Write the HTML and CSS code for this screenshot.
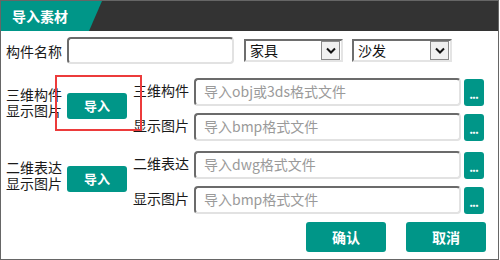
FILE: index.html
```html
<!DOCTYPE html>
<html lang="zh">
<head>
  <meta charset="UTF-8">
  <title>导入素材</title>
  <link rel="stylesheet" href="styles.css">
</head>
<body>
  <div class="dialog">
    <!-- 标题栏 -->
    <div class="title-bar">
      <div class="title-tab">导入素材</div>
    </div>

    <!-- 构件名称 -->
    <div class="name-row">
      <span class="label name-label">构件名称</span>
      <div class="text-box name-box"></div>
      <div class="select select-a">
        <span class="select-text">家具</span>
        <span class="select-arrow">
          <svg width="10" height="7" viewBox="0 0 10 7"><polyline points="1,1.5 5,5.5 9,1.5" fill="none" stroke="#111" stroke-width="2"/></svg>
        </span>
      </div>
      <div class="select select-b">
        <span class="select-text">沙发</span>
        <span class="select-arrow">
          <svg width="10" height="7" viewBox="0 0 10 7"><polyline points="1,1.5 5,5.5 9,1.5" fill="none" stroke="#111" stroke-width="2"/></svg>
        </span>
      </div>
    </div>

    <!-- 三维构件 -->
    <div class="section first">
      <div class="section-left">
        <div class="two-line">
          <div class="line">三维构件</div>
          <div class="line">显示图片</div>
        </div>
        <button class="btn btn-import">导入</button>
      </div>
      <div class="section-right">
        <div class="file-row">
          <span class="label file-label">三维构件</span>
          <div class="text-box file-box">导入obj或3ds格式文件</div>
          <button class="btn btn-more">...</button>
        </div>
        <div class="file-row">
          <span class="label file-label">显示图片</span>
          <div class="text-box file-box">导入bmp格式文件</div>
          <button class="btn btn-more">...</button>
        </div>
      </div>
    </div>

    <!-- 二维表达 -->
    <div class="section second">
      <div class="section-left">
        <div class="two-line">
          <div class="line">二维表达</div>
          <div class="line">显示图片</div>
        </div>
        <button class="btn btn-import">导入</button>
      </div>
      <div class="section-right">
        <div class="file-row">
          <span class="label file-label">二维表达</span>
          <div class="text-box file-box">导入dwg格式文件</div>
          <button class="btn btn-more">...</button>
        </div>
        <div class="file-row">
          <span class="label file-label">显示图片</span>
          <div class="text-box file-box">导入bmp格式文件</div>
          <button class="btn btn-more">...</button>
        </div>
      </div>
    </div>

    <!-- 底部按钮 -->
    <div class="footer">
      <button class="btn btn-footer">确认</button>
      <button class="btn btn-footer">取消</button>
    </div>

    <!-- 标注框 -->
    <div class="highlight"></div>
  </div>
</body>
</html>
```

FILE: styles.css
```css
* {
  margin: 0;
  padding: 0;
  box-sizing: border-box;
}
body {
  font-family: "Noto Sans CJK SC", "Liberation Sans", sans-serif;
  font-size: 14px;
  color: #1a1a1a;
  background: #fff;
}
.dialog {
  position: relative;
  width: 499px;
  height: 260px;
  border: 1px solid #666;
  background: #fff;
}
/* 标题栏 */
.title-bar {
  height: 30px;
  background: #333;
}
.title-tab {
  width: 101px;
  height: 30px;
  padding-left: 11px;
  background: #009688;
  color: #fff;
  font-weight: bold;
  font-size: 14px;
  line-height: 30px;
  clip-path: polygon(0 0, 101px 0, 88px 100%, 0 100%);
}
.label {
  font-size: 14px;
  line-height: 16px;
  color: #1a1a1a;
}
/* 第一行 */
.name-row {
  display: flex;
  align-items: center;
  height: 27px;
  margin-top: 6px;
  padding-left: 5px;
}
.name-label {
  width: 61px;
}
.text-box {
  height: 27px;
  border-style: solid;
  border-width: 2px;
  border-color: #6b6b6b #e2e2e2 #e2e2e2 #6b6b6b;
  border-radius: 4px;
  background: #fff;
  color: #9a9a9a;
  font-size: 14px;
  line-height: 23px;
  padding-left: 8px;
}
.name-box {
  width: 167px;
}
.select {
  display: flex;
  align-items: center;
  justify-content: space-between;
  height: 23px;
  border-style: solid;
  border-width: 2px;
  border-color: #6e6e6e #e4e4e4 #e4e4e4 #6e6e6e;
  background: #fff;
  padding-left: 4px;
  padding-right: 1px;
}
.select-a {
  width: 99px;
  margin-left: 10px;
}
.select-b {
  width: 100px;
  margin-left: 9px;
}
.select-text {
  line-height: 19px;
  color: #111;
}
.select-arrow {
  display: flex;
  align-items: center;
  justify-content: center;
  width: 19px;
  height: 19px;
  border: 1px solid #8a8a8a;
  background: #f0f0f0;
}
/* 导入区域 */
.section {
  display: flex;
}
.section.first {
  margin-top: 14px;
}
.section.second {
  margin-top: 10px;
}
.section-left {
  display: flex;
  align-items: center;
  width: 132px;
  height: 32px;
  margin-top: 9px;
  padding-left: 5px;
}
.two-line {
  width: 61px;
}
.line {
  height: 16.5px;
  font-family: "Liberation Sans", "Noto Sans CJK SC", sans-serif;
  font-size: 14px;
  line-height: 16.5px;
  color: #1a1a1a;
}
.btn {
  border: none;
  border-radius: 3px;
  background: #009688;
  color: #fff;
  font-family: "Noto Sans CJK SC", "Liberation Sans", sans-serif;
  font-weight: bold;
  cursor: pointer;
}
.btn-import {
  width: 60px;
  height: 26px;
  margin-top: 6px;
  font-size: 13px;
  line-height: 26px;
}
.section-right {
  display: flex;
  flex-direction: column;
  gap: 7px;
}
.file-row {
  display: flex;
  align-items: center;
  height: 28px;
}
.file-label {
  width: 61px;
  margin-top: -4px;
}
.file-box {
  width: 267px;
  height: 28px;
}
.btn-more {
  width: 20px;
  height: 27px;
  margin-left: 3px;
  font-size: 12px;
  line-height: 30px;
  letter-spacing: -1px;
  padding-right: 1px;
}
/* 底部 */
.footer {
  display: flex;
  justify-content: flex-end;
  gap: 20px;
  margin-top: 8px;
  padding-right: 12px;
}
.btn-footer {
  width: 80px;
  height: 30px;
  font-size: 14px;
  line-height: 30px;
}
/* 红色标注框 */
.highlight {
  position: absolute;
  left: 54px;
  top: 74px;
  width: 87px;
  height: 56px;
  border: 2px solid #ec3b3b;
}
```
